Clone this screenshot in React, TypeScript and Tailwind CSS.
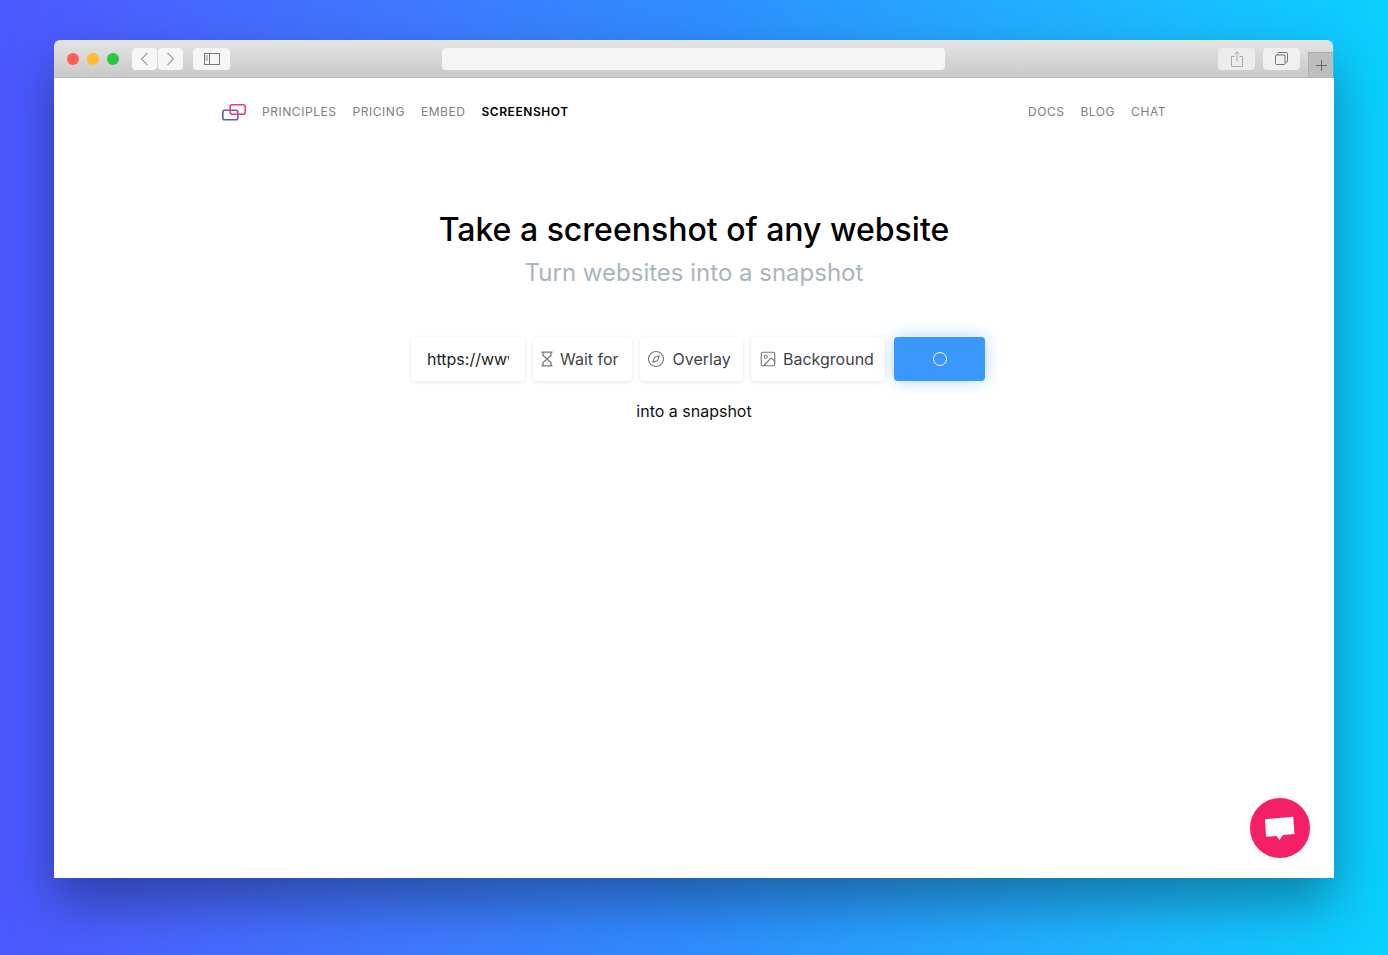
import { Compass, Image as ImageIcon } from "lucide-react";

function Logo() {
  return (
    <svg width="24" height="17" viewBox="0 0 24 17" fill="none" strokeWidth="1.6">
      <rect x="0.8" y="6.3" width="15" height="9.5" rx="2" stroke="#6d55b0" />
      <rect x="8.2" y="0.8" width="15" height="9.5" rx="2" stroke="#ee3a7c" />
    </svg>
  );
}

function TitleBar() {
  return (
    <div className="relative mr-px flex h-[38px] items-center rounded-t-[6px] border-b border-[#b8b8b8] bg-gradient-to-b from-[#e4e4e4] to-[#c9c9c9] pl-[13px]">
      <div className="flex gap-2">
        <span className="h-3 w-3 rounded-full bg-[#ff5f57]" />
        <span className="h-3 w-3 rounded-full bg-[#ffbd2e]" />
        <span className="h-3 w-3 rounded-full bg-[#28c840]" />
      </div>
      <div className="ml-[13px] flex gap-px">
        <div className="flex h-[22px] w-[25px] items-center justify-center rounded-[4px] bg-[#f6f6f6]">
          <svg width="9" height="14" viewBox="0 0 9 14" fill="none" stroke="#a3a3a3" strokeWidth="1.2">
            <path d="M7.5 1 1.5 7l6 6" />
          </svg>
        </div>
        <div className="flex h-[22px] w-[25px] items-center justify-center rounded-[4px] bg-[#f6f6f6]">
          <svg width="9" height="14" viewBox="0 0 9 14" fill="none" stroke="#a3a3a3" strokeWidth="1.2">
            <path d="M1.5 1l6 6-6 6" />
          </svg>
        </div>
      </div>
      <div className="ml-[10px] flex h-[22px] w-[37px] items-center justify-center rounded-[4px] bg-[#f6f6f6]">
        <svg width="16" height="12" viewBox="0 0 16 12" fill="none" stroke="#777777">
          <rect x="0.5" y="0.5" width="15" height="11" />
          <path d="M5.5 0.5v11" />
          <path d="M1.5 3h2.5M1.5 5h2.5M1.5 7h2.5" strokeWidth="0.8" />
        </svg>
      </div>
      <div className="ml-[212px] h-[22px] w-[503px] rounded-[4px] bg-[#f5f5f5]" />
      <div className="ml-auto mr-[33px] flex gap-[8px]">
        <div className="flex h-[22px] w-[37px] items-center justify-center rounded-[4px] bg-[#ececec]">
          <svg width="12" height="16" viewBox="0 0 12 16" fill="none" stroke="#a8a8a8">
            <path d="M3.5 5.5H.5v10h11v-10H8.5M6 10.5V.8M3.5 3 6 .8 8.5 3" />
          </svg>
        </div>
        <div className="flex h-[22px] w-[37px] items-center justify-center rounded-[4px] bg-[#f0f0f0]">
          <svg width="13" height="13" viewBox="0 0 13 13" fill="none" stroke="#757575">
            <rect x="0.5" y="3" width="9.5" height="9.5" rx="1" />
            <path d="M3 3V1.5a1 1 0 0 1 1-1h7.5a1 1 0 0 1 1 1V9a1 1 0 0 1-1 1H10" />
          </svg>
        </div>
      </div>
      <div className="absolute bottom-0 right-0 flex h-[25px] w-[25px] items-center justify-center border-l border-t border-[#adadad] bg-[#bdbdbd]">
        <svg width="11" height="11" viewBox="0 0 11 11" stroke="#666666">
          <path d="M5.5 0v11M0 5.5h11" />
        </svg>
      </div>
    </div>
  );
}

function Field({ icon, label, className }: { icon: React.ReactNode; label: string; className: string }) {
  return (
    <div className={`flex h-11 items-center rounded-[4px] bg-white text-[#3f444b] shadow-[0_1px_4px_rgba(0,0,0,0.11)] ${className}`}>
      {icon}
      <span>{label}</span>
    </div>
  );
}

export default function App() {
  return (
    <div className="h-[955px] overflow-hidden bg-gradient-to-r from-[#4c57ff] via-[#2f8dff] to-[#08d0ff] pl-[54px] pt-10 font-['Inter',sans-serif]">
      <div className="flex h-[838px] w-[1280px] flex-col shadow-[0_25px_50px_rgba(0,0,0,0.35)]">
        <TitleBar />
        <div className="relative flex-1 bg-white">
          <nav className="mx-auto flex w-[944px] items-center pt-[25px] text-xs uppercase leading-[18px] tracking-[0.55px] text-[#808080]">
            <Logo />
            <div className="ml-4 flex gap-4">
              <span>Principles</span>
              <span>Pricing</span>
              <span>Embed</span>
              <span className="font-semibold text-black">Screenshot</span>
            </div>
            <div className="ml-auto flex gap-4">
              <span>Docs</span>
              <span>Blog</span>
              <span>Chat</span>
            </div>
          </nav>
          <div className="flex flex-col items-center">
            <h1 className="mt-[88px] text-[32px] font-medium leading-[42px] text-black">Take a screenshot of any website</h1>
            <p className="text-2xl leading-[44px] text-[#aab4bf]">Turn websites into a snapshot</p>
            <div className="ml-2 mt-[42px] flex gap-2 text-base">
              <div className="flex h-11 w-[114px] items-center rounded-[4px] bg-white px-4 text-[#1d1f23] shadow-[0_1px_4px_rgba(0,0,0,0.11)]">
                <span className="block w-[84px] overflow-hidden whitespace-nowrap">https://www.microlink.io</span>
              </div>
              <Field
                className="w-[99px] gap-[7px] pl-2"
                label="Wait for"
                icon={
                  <svg width="12" height="16" viewBox="0 0 12 16" fill="none" stroke="#777777" strokeWidth="1.3">
                    <path d="M.5 1.2h11M.5 14.8h11M2 1.2v3.3L6 8l4-3.5V1.2M2 14.8v-3.3L6 8l4 3.5v3.3" />
                  </svg>
                }
              />
              <Field className="w-[103px] gap-[7.5px] pl-[7px]" label="Overlay" icon={<Compass size={18} strokeWidth={1.5} className="text-[#777777]" />} />
              <Field className="w-[134px] gap-1.5 pl-2" label="Background" icon={<ImageIcon size={18} strokeWidth={1.5} className="text-[#777777]" />} />
              <div className="ml-px flex h-11 w-[91px] items-center justify-center rounded-[4px] bg-[#3a97fb] shadow-[0_0_16px_rgba(58,151,251,0.4)]">
                <span className="h-[14px] w-[14px] rounded-full border border-white" />
              </div>
            </div>
            <p className="mt-[18px] text-base leading-6 text-[#111111]">into a snapshot</p>
          </div>
          <div className="absolute bottom-5 right-6 flex h-[60px] w-[60px] items-center justify-center rounded-full bg-[#f51f68] shadow-[0_2px_10px_rgba(0,0,0,0.06)]">
            <svg width="30" height="25" viewBox="0 0 30 25" fill="#ffffff">
              <path d="M0 3.2 28.2 0.8 29.5 18 18 19 14.5 24 11.5 20 1 20.8Z" />
            </svg>
          </div>
        </div>
      </div>
    </div>
  );
}
